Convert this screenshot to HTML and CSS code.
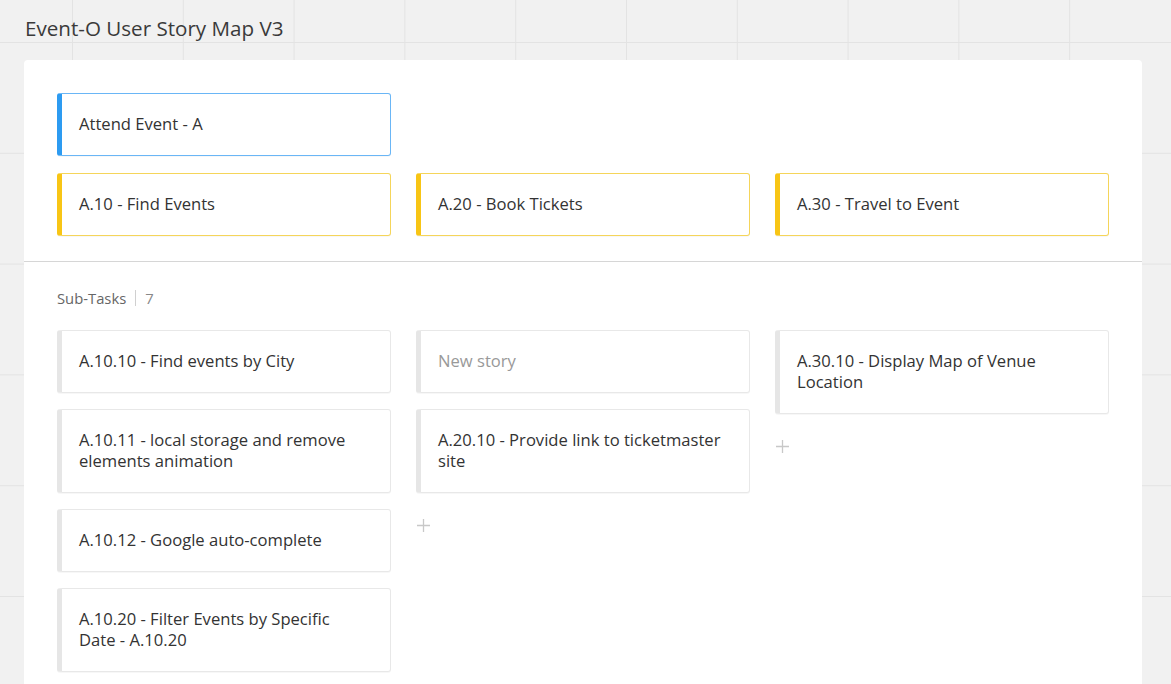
FILE: index.html
```html
<!DOCTYPE html>
<html lang="en">
<head>
<meta charset="utf-8">
<title>Event-O User Story Map V3</title>
<link rel="stylesheet" href="styles.css">
</head>
<body>
<div class="page">
  <h1 class="title">Event-O User Story Map V3</h1>
  <section class="board">
    <div class="top">
      <div class="row">
        <div class="card card-blue">Attend Event - A</div>
      </div>
      <div class="row">
        <div class="card card-yellow">A.10 - Find Events</div>
        <div class="card card-yellow">A.20 - Book Tickets</div>
        <div class="card card-yellow">A.30 - Travel to Event</div>
      </div>
    </div>
    <div class="bottom">
      <div class="section-label"><span>Sub-Tasks</span><span class="sep"></span><span class="count">7</span></div>
      <div class="columns">
        <div class="col">
          <div class="card card-grey">A.10.10 - Find events by City</div>
          <div class="card card-grey">A.10.11 - local storage and remove elements animation</div>
          <div class="card card-grey">A.10.12 - Google auto-complete</div>
          <div class="card card-grey">A.10.20 - Filter Events by Specific Date - A.10.20</div>
        </div>
        <div class="col">
          <div class="card card-grey placeholder">New story</div>
          <div class="card card-grey">A.20.10 - Provide link to ticketmaster site</div>
          <div class="add"><svg width="13" height="13" viewBox="0 0 13 13"><path d="M6.5 0v13M0 6.5h13" stroke="#c8c8c8" stroke-width="1.3" fill="none"/></svg></div>
        </div>
        <div class="col">
          <div class="card card-grey">A.30.10 - Display Map of Venue Location</div>
          <div class="add"><svg width="13" height="13" viewBox="0 0 13 13"><path d="M6.5 0v13M0 6.5h13" stroke="#c8c8c8" stroke-width="1.3" fill="none"/></svg></div>
        </div>
      </div>
    </div>
  </section>
</div>
</body>
</html>
```

FILE: styles.css
```css
html, body {
  margin: 0;
  padding: 0;
  height: 100%;
  overflow: hidden;
}
body {
  background-color: #f1f1f1;
  background-image:
    linear-gradient(to right, #e3e3e3 1px, transparent 1px),
    linear-gradient(to bottom, #e3e3e3 1px, transparent 1px);
  background-size: 110.8px 110.8px;
  background-position: 72px 42px;
  font-family: "Open Sans", "Liberation Sans", sans-serif;
  color: #333;
}
.page {
  padding: 0 29px 0 24px;
}
.title {
  margin: 0;
  padding: 14px 0 0 1px;
  height: 60px;
  box-sizing: border-box;
  font-size: 20.6px;
  font-weight: 400;
  line-height: 28px;
  color: #3a3a3a;
}
.board {
  background: #fff;
  border-radius: 4px 4px 0 0;
  min-height: 700px;
}
.top {
  padding: 33px 33px 8px;
  border-bottom: 1px solid #d6d6d6;
}
.row {
  display: grid;
  grid-template-columns: repeat(3, 334px);
  column-gap: 25px;
}
.card {
  box-sizing: border-box;
  border: 1px solid #e6e6e6;
  border-left-width: 5px;
  border-radius: 3px;
  padding: 19px 25px 21px 17px;
  font-size: 16.6px;
  line-height: 21px;
  color: #333;
  margin-bottom: 17px;
  background: #fff;
  box-shadow: 0 1px 0 rgba(0, 0, 0, 0.03);
}
.card-blue {
  border-color: #6ab6f6;
  border-left-color: #2d9bf1;
}
.card-yellow {
  border-color: #f5d55a;
  border-left-color: #f8c515;
}
.card-grey {
  border-color: #e8e8e8;
  border-left-color: #e6e6e6;
}
.placeholder {
  color: #999;
}
.bottom {
  padding: 26px 33px 0;
}
.section-label {
  display: flex;
  align-items: center;
  font-size: 14.8px;
  line-height: 20px;
  color: #666;
  margin-bottom: 22px;
}
.section-label .sep {
  width: 1px;
  height: 16px;
  background: #d0d0d0;
  margin: 0 9px;
}
.section-label .count {
  color: #888;
}
.columns {
  display: grid;
  grid-template-columns: repeat(3, 334px);
  column-gap: 25px;
  align-items: start;
}
.col {
  display: flex;
  flex-direction: column;
}
.col .card {
  margin-bottom: 16px;
}
.add {
  padding: 10px 0 0 1px;
  height: 13px;
  line-height: 0;
}
```
